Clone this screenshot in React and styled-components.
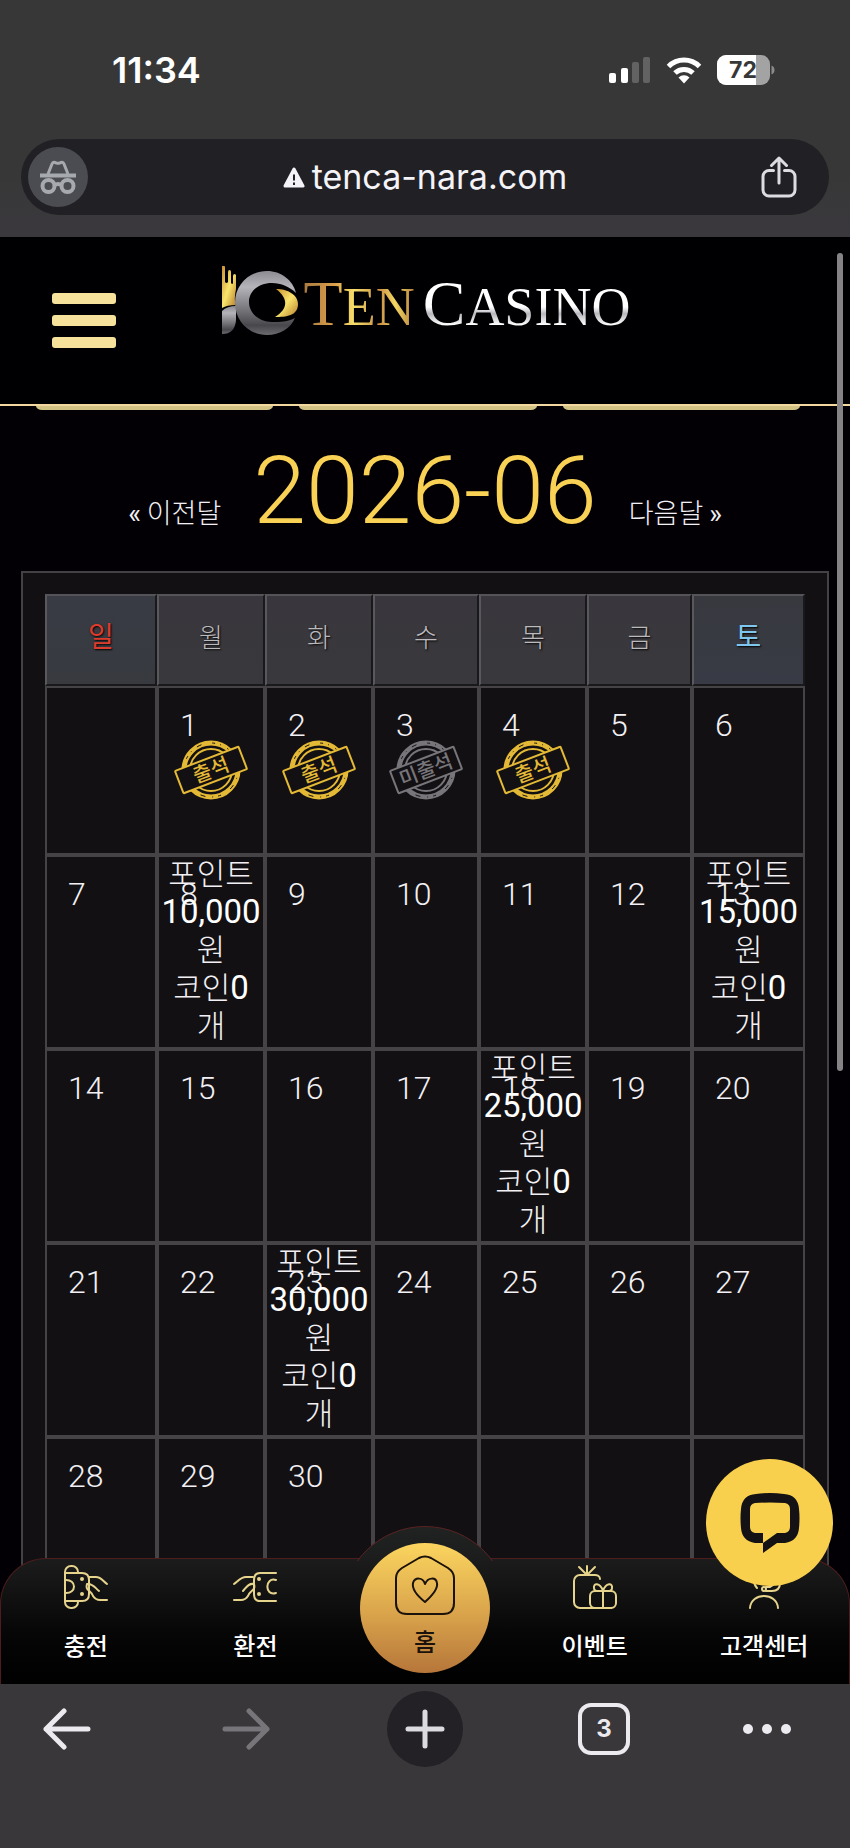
import React from "react";
import styled, { createGlobalStyle, css } from "styled-components";

const korean = '"Noto Sans CJK KR", "Noto Sans", sans-serif';
const digits = 'Roboto, "Noto Sans CJK KR", sans-serif';
const latin = 'Inter, "Noto Sans CJK KR", sans-serif';

const GlobalStyle = createGlobalStyle`
  *, *::before, *::after { box-sizing: border-box; }
  html, body { margin: 0; height: 100%; background: #39373a; }
  button { border: 0; padding: 0; background: none; font: inherit; color: inherit; cursor: pointer; }
  a { color: inherit; text-decoration: none; }
  svg { display: block; }
`;

const Screen = styled.div`
  display: flex;
  flex-direction: column;
  height: 100vh;
  font-family: ${korean};
  color: #f2f0f4;
`;

/* ---------- browser top ---------- */

const BrowserTop = styled.header`
  flex: none;
  background: linear-gradient(#373737 70%, #3a383d);
  padding-bottom: 22px;
  font-family: ${latin};
`;

const StatusBar = styled.div`
  display: flex;
  align-items: center;
  justify-content: space-between;
  height: 139px;
  padding: 0 75px 0 112px;
`;

const Clock = styled.time`
  font-size: 36px;
  font-weight: 600;
  color: #fff;
`;

const StatusIcons = styled.div`
  display: flex;
  align-items: center;
  gap: 15px;
`;

const AddressBar = styled.div`
  display: grid;
  grid-template-columns: 1fr auto 1fr;
  align-items: center;
  height: 76px;
  margin: 0 21px;
  padding: 0 32px 0 7px;
  border-radius: 38px;
  background: #212024;
`;

const IncognitoBadge = styled.button`
  display: grid;
  place-items: center;
  width: 60px;
  height: 60px;
  border-radius: 50%;
  background: #4b4c51;
`;

const Address = styled.button`
  display: flex;
  align-items: center;
  gap: 7px;
  padding-left: 25px;
  font-size: 34px;
  line-height: 40px;
  color: #f4f3f7;
`;

const ShareButton = styled.button`
  justify-self: end;
`;

/* ---------- site ---------- */

const Site = styled.div`
  position: relative;
  flex: 1;
  min-height: 0;
  overflow: hidden;
  background: #020004;
`;

const SiteHeader = styled.div`
  display: grid;
  grid-template-columns: 1fr auto 1fr;
  align-items: start;
  height: 169px;
  padding: 0 52px;
  border-bottom: 2px solid #f3d9a0;
  background: #000003;
`;

const MenuButton = styled.button`
  display: flex;
  flex-direction: column;
  gap: 11px;
  width: 64px;
  margin-top: 56px;
`;

const MenuBar = styled.span`
  height: 11px;
  border-radius: 3px;
  background: #f6e29a;
`;

const LogoLink = styled.a`
  display: flex;
  align-items: flex-start;
  gap: 4px;
  margin-top: 29px;
  padding-left: 2px;
`;

const LogoText = styled.span`
  display: flex;
  gap: 8px;
  margin-top: 5px;
  font-family: "Liberation Serif", serif;
  font-size: 54px;
  line-height: 66px;
`;

const LogoWord = styled.span`
  display: block;
  color: transparent;
  background: ${(p) =>
    p.$gold
      ? "linear-gradient(90deg, #a9793f, #dba04c 28%, #f7e06a 45%, #c98f45 68%, #f5d862 82%, #b27c3e)"
      : "linear-gradient(#fff 52%, #b9b7bd 62%, #fff 78%)"};
  background-clip: text;
  -webkit-background-clip: text;
  &::first-letter { font-size: 64px; }
`;

const TabEdges = styled.div`
  display: grid;
  grid-template-columns: repeat(3, 1fr);
  gap: 26px;
  padding: 0 50px 0 36px;
`;

const TabEdge = styled.div`
  height: 4px;
  border-radius: 0 0 6px 6px / 0 0 4px 4px;
  background: #d2c283;
`;

const MonthBar = styled.nav`
  display: flex;
  align-items: baseline;
  justify-content: center;
  gap: 32px;
  padding: 35px 0 34px;
`;

const MonthTitle = styled.h1`
  margin: 0;
  font-family: ${digits};
  font-size: 95px;
  line-height: 92px;
  font-weight: 300;
  color: #f8d155;
`;

const MonthLink = styled.a`
  font-size: 27px;
  line-height: 38px;
  font-weight: 300;
`;

const Chevrons = styled.span`
  font-family: ${digits};
  font-weight: 400;
`;

const Panel = styled.section`
  margin: 0 21px;
  padding: 21px 22px;
  border: 2px solid #434144;
  background: #121013;
`;

const Calendar = styled.table`
  width: 100%;
  table-layout: fixed;
  border-collapse: separate;
  border-spacing: 0;
`;

const dayTone = {
  sun: css`
    color: #dc3c2c;
    background: linear-gradient(#393b45, #383a40);
    font-size: 28px;
    font-weight: 400;
  `,
  sat: css`
    color: #7fc6ee;
    background: linear-gradient(#38393f, #383b45);
    font-size: 28px;
    font-weight: 400;
  `,
  week: css`
    color: #bcbabd;
    background: linear-gradient(#39373d, #39383c);
    font-size: 26px;
    font-weight: 300;
  `,
};

const WeekdayCell = styled.th`
  height: 92px;
  padding: 0 0 10px;
  border: 2px solid;
  border-color: #545358 #19181b #19181b #59585c;
  text-shadow: 1px 1px 2px #000;
  ${(p) => dayTone[p.$tone]}
`;

const DayCell = styled.td`
  height: ${(p) => (p.$short ? 169 : 194)}px;
  padding: 0;
  border: 2px solid #454346;
  vertical-align: top;
`;

const DayStack = styled.div`
  display: grid;
  > * { grid-area: 1 / 1; }
`;

const DayNumber = styled.span`
  padding: 18px 0 0 21px;
  font-family: ${digits};
  font-size: 32px;
  line-height: 38px;
  font-weight: 300;
`;

const StampSlot = styled.div`
  display: grid;
  justify-content: center;
  padding-top: 50px;
`;

const Reward = styled.div`
  height: 190px;
  font-size: 31px;
  line-height: 30px;
  font-weight: 300;
  text-align: center;
  white-space: nowrap;
`;

const RewardLine = styled.div`
  height: 38px;
`;

const Amount = styled.span`
  font-family: ${digits};
  font-size: 33px;
  font-weight: 400;
  line-height: 30px;
  color: #fff;
`;

const ScrollThumb = styled.div`
  position: absolute;
  top: 16px;
  right: 7px;
  width: 6px;
  height: 56.5%;
  border-radius: 3px;
  background: #858386;
`;

/* ---------- site bottom navigation ---------- */

const BottomNav = styled.nav`
  position: absolute;
  left: 0;
  right: 0;
  bottom: 0;
  display: grid;
  grid-template-columns: repeat(5, 1fr);
  height: 126px;
  border: 1px solid #4d1d1e;
  border-bottom: 0;
  border-radius: 46px 46px 0 0;
  background: linear-gradient(#1c1c1d, #060607 60%, #000);
`;

const Dome = styled.div`
  position: absolute;
  top: -33px;
  left: 50%;
  width: 168px;
  height: 35px;
  margin-left: -84px;
  overflow: hidden;
  &::before {
    content: "";
    display: block;
    height: 168px;
    border: 1px solid #5a2223;
    border-radius: 50%;
    background: linear-gradient(#202321, #1c1c1d 35px);
  }
`;

const NavItem = styled.a`
  display: flex;
  flex-direction: column;
  align-items: center;
  gap: 24px;
  padding-top: 6px;
  font-size: 24px;
  line-height: 24px;
  font-weight: 500;
  color: #fff;
`;

const HomeItem = styled.a`
  position: relative;
  justify-self: center;
  display: flex;
  flex-direction: column;
  align-items: center;
  gap: 14px;
  width: 130px;
  height: 130px;
  margin-top: -16px;
  padding-top: 12px;
  border-radius: 50%;
  font-size: 24px;
  line-height: 24px;
  font-weight: 500;
  color: #1a120b;
  background: linear-gradient(#fbd55f, #d9a34b 55%, #b6763a);
`;

const ChatButton = styled.button`
  position: absolute;
  right: 17px;
  bottom: 98px;
  display: grid;
  place-items: center;
  width: 127px;
  height: 127px;
  border-radius: 50%;
  background: #f8d04d;
`;

/* ---------- browser bottom ---------- */

const BrowserTools = styled.footer`
  flex: none;
  display: flex;
  align-items: flex-start;
  justify-content: space-between;
  height: 164px;
  padding: 7px 59px 0 27px;
  background: #39373a;
`;

const Tool = styled.button`
  display: grid;
  place-items: center;
  width: ${(p) => (p.$narrow ? 48 : 80)}px;
  height: 76px;
`;

const NewTab = styled.span`
  display: grid;
  place-items: center;
  width: 76px;
  height: 76px;
  border-radius: 50%;
  background: #232125;
`;

const TabCount = styled.span`
  display: grid;
  place-items: center;
  width: 52px;
  height: 52px;
  border: 4px solid #eceaee;
  border-radius: 13px;
  font-family: ${latin};
  font-size: 24px;
  line-height: 24px;
  font-weight: 700;
  color: #eceaee;
`;

/* ---------- drawings ---------- */

const Signal = () => (
  <svg width="42" height="28" viewBox="0 0 42 28">
    <rect x="0" y="17" width="7" height="10" rx="2" fill="#fff" />
    <rect x="12" y="12" width="7" height="15" rx="2" fill="#fff" />
    <rect x="23" y="6" width="7" height="21" rx="2" fill="#626263" />
    <rect x="34" y="1" width="7" height="26" rx="2" fill="#626263" />
  </svg>
);

const Wifi = () => (
  <svg width="36" height="28" viewBox="0 0 36 28" fill="none" stroke="#fff" strokeWidth="5">
    <path d="M2.5 10.5a22 22 0 0 1 31 0" />
    <path d="M9 17a13 13 0 0 1 18 0" />
    <path d="M12.5 21.5a8 8 0 0 1 11 0L18 27.5z" fill="#fff" stroke="none" />
  </svg>
);

const Battery = () => (
  <svg width="58" height="30" viewBox="0 0 58 30">
    <clipPath id="cell"><rect width="53" height="30" rx="9" /></clipPath>
    <g clipPath="url(#cell)">
      <rect width="53" height="30" fill="#a3a3a4" />
      <rect width="39" height="30" fill="#fff" />
    </g>
    <path d="M54.500 10.500c4 1 4 8 0 9z" fill="#8b8b8c" />
    <text x="26" y="23" textAnchor="middle" fontFamily="Inter, sans-serif" fontSize="23" fontWeight="700" fill="#373737">72</text>
  </svg>
);

const Incognito = () => (
  <svg width="38" height="34" viewBox="0 0 38 34" fill="none" stroke="#a6a9ad" strokeWidth="4">
    <path d="M9 14L13 4c.6-1.600 1.600-2 3-1.500l1.500.6c1 .3 2 .3 3 0l1.500-.6c1.400-.5 2.400-.1 3 1.500l4 10" strokeWidth="3" />
    <path d="M1 15.500h36" />
    <circle cx="9.500" cy="26" r="6" />
    <circle cx="28.500" cy="26" r="6" />
    <path d="M15 25.500c2.500-1.800 5.500-1.800 8 0" />
  </svg>
);

const Warning = () => (
  <svg width="22" height="21" viewBox="0 0 22 21">
    <path d="M11 2L20 19H2z" fill="#f4f3f7" stroke="#f4f3f7" strokeWidth="3" strokeLinejoin="round" />
    <path d="M11 7.500v6M11 15.500v2.500" stroke="#212024" strokeWidth="2" />
  </svg>
);

const Share = () => (
  <svg width="36" height="42" viewBox="0 0 36 42" fill="none" stroke="#dddce1" strokeWidth="3" strokeLinecap="round" strokeLinejoin="round">
    <path d="M12.500 14.500H8a6 6 0 0 0-6 6V34a6 6 0 0 0 6 6h20a6 6 0 0 0 6-6V20.500a6 6 0 0 0-6-6h-4.500" />
    <path d="M18 27V2.500M10.500 9.500L18 2l7.500 7.500" />
  </svg>
);

const LogoMark = () => (
  <svg width="78" height="70" viewBox="0 0 78 70">
    <defs>
      <linearGradient id="silver" x1="0" y1="0" x2="0" y2="1">
        <stop offset="0" stopColor="#8c8b92" />
        <stop offset=".25" stopColor="#b5b4ba" />
        <stop offset=".6" stopColor="#77767b" />
        <stop offset=".85" stopColor="#48474b" />
        <stop offset="1" stopColor="#6c6b70" />
      </linearGradient>
      <linearGradient id="gold" x1="0" y1="0" x2="1" y2="1">
        <stop offset="0" stopColor="#c78e30" />
        <stop offset=".5" stopColor="#fae46c" />
        <stop offset="1" stopColor="#b57c2c" />
      </linearGradient>
    </defs>
    <path d="M0 0h2q1 0 1 1v15q1.500 2 3 0V6q0-2 1.500-2T9 6v11q1.500 2 2 0v-7q0-2 2-2l1 1v14q-2 9-.5 16Q5 39 0 42z" fill="url(#gold)" />
    <path d="M0 45Q5 40 14 40v14Q13 68 0 68z" fill="url(#silver)" />
    <path d="M74 27C71 14 59 5 45 5C27 5 13 19 13 37S27 69 45 69C58 69 69 62 73 52C66 56 58 56 50 56C37 56 27 47 27 36S37 17 50 17C59 17 68 21 74 27Z" fill="url(#silver)" />
    <path d="M54 23C66 23 76 29 76 38C76 50 64 51 53 51C66 43 67 33 54 23Z" fill="url(#gold)" />
  </svg>
);

const Stamp = ({ missed }) => {
  const ink = missed ? "#77757a" : "#e3b935";
  return (
    <svg width="76" height="64" viewBox="0 0 76 64" fill="none" stroke={ink}>
      <circle cx="38" cy="32" r="27" strokeWidth="5" />
      <circle cx="38" cy="32" r="27" stroke="#121013" strokeWidth="1" strokeDasharray="3 5 1 7 5 11" />
      <circle cx="38" cy="32" r="21" strokeWidth="2" />
      <g transform="rotate(-21 38 32)">
        <rect x="4" y="20" width="68" height="24" rx="1" fill="#121013" strokeWidth="2" />
        <text x="38" y="39" textAnchor="middle" fontFamily={korean} fontSize="20" fontWeight="500" fill={ink} stroke="none">
          {missed ? "미출석" : "출석"}
        </text>
      </g>
    </svg>
  );
};

const LineIcon = ({ children }) => (
  <svg width="44" height="44" viewBox="0 0 44 44" fill="none" stroke="#e6d48c" strokeWidth="2" strokeLinecap="round" strokeLinejoin="round">
    {children}
  </svg>
);

const DepositIcon = () => (
  <LineIcon>
    <path d="M14 8V7a6 6 0 0 0-6-6H7a6 6 0 0 0-6 6v30a6 6 0 0 0 6 6h1a6 6 0 0 0 6-6v-1" />
    <path d="M1 8h17q7 0 7 7v14q0 7-7 7H1M1 15c12-1 12 14 0 13" />
    <circle cx="18" cy="14" r="1" />
    <circle cx="18" cy="29" r="1" />
    <path d="M25 12h7c5 0 7 4 11 7M23 19c6-1 8 4 12 7M23 19c-2 7 4 6 6 12 2 3 4 4 7 4h7" />
  </LineIcon>
);

const WithdrawIcon = () => (
  <LineIcon>
    <path d="M43 8H27q-6 0-6 7v14q0 7 6 7h16M43 15c-11-4-12 17 0 13" />
    <circle cx="26" cy="14" r="1" />
    <circle cx="26" cy="29" r="1" />
    <path d="M20 12h-7c-5 0-8 4-12 7M21 19c-6-1-8 4-11 7M21 19c2 7-4 6-6 12-2 3-4 4-7 4H1" />
  </LineIcon>
);

const EventIcon = () => (
  <LineIcon>
    <path d="M14 1v8M6 2l7 7M22 2l-7 7" />
    <path d="M27 14c0-3-3-4-5-4H7a6 6 0 0 0-6 6v21a6 6 0 0 0 6 6h31" />
    <rect x="17" y="26" width="26" height="17" rx="5" />
    <path d="M30 26v17M30 26c-3-9-10-8-9-3 0 2 2 3 4 3M30 26c3-9 10-8 9-3 0 2-2 3-4 3" />
  </LineIcon>
);

const SupportIcon = () => (
  <LineIcon>
    <path d="M13 17a9 9 0 0 1 18 0M12 15c0 4 1 6 3 8M24 26h6c5 0 8-3 8-8M24 22h4l3-2" />
    <circle cx="22" cy="24" r="2" />
    <path d="M8 43c1-16 27-16 28 0" />
  </LineIcon>
);

const HomeIcon = () => (
  <svg width="60" height="60" viewBox="0 0 60 60" fill="none" stroke="#1a120b" strokeWidth="2" strokeLinejoin="round">
    <path d="M24 3Q30 0 36 3L53 13Q59 17 59 23V48Q59 59 48 59H12Q1 59 1 48V23Q1 17 7 13Z" />
    <path d="M30 47C20 39 17 33 18 28C20 22 28 22 30 29C33 22 41 22 42 28C43 33 39 39 30 47Z" />
  </svg>
);

const ChatIcon = () => (
  <svg width="60" height="60" viewBox="0 0 60 60">
    <path
      fillRule="evenodd"
      fill="#141214"
      d="M16 1Q30-1 44 1Q58 2 59 16Q60 25 59 35Q58 48 45 50H37L23 60V50H15Q2 48 1 35Q0 25 1 16Q2 2 16 1Z
         M15 10Q10 11 10 16V34Q10 39 15 40H23V50L37 40H45Q50 39 50 34V16Q50 11 45 10Q30 9 15 10Z"
    />
  </svg>
);

const Arrow = ({ forward }) => (
  <svg width="50" height="42" viewBox="0 0 50 42" fill="none" stroke={forward ? "#777579" : "#eceaee"} strokeWidth="5" strokeLinecap="round" strokeLinejoin="round">
    <path d={forward ? "M4 21h42M28 3l18 18-18 18" : "M46 21H4M22 3L4 21l18 18"} />
  </svg>
);

const Plus = () => (
  <svg width="40" height="40" viewBox="0 0 40 40" stroke="#dcdbdf" strokeWidth="5" strokeLinecap="round">
    <path d="M20 3v34M3 20h34" />
  </svg>
);

const Dots = () => (
  <svg width="48" height="10" viewBox="0 0 48 10" fill="#eceaee">
    <circle cx="5" cy="5" r="5" />
    <circle cx="24" cy="5" r="5" />
    <circle cx="43" cy="5" r="5" />
  </svg>
);

/* ---------- data ---------- */

const columns = [112, 108, 108, 106, 108, 105, 113];

const weekdays = [
  ["일", "sun"],
  ["월", "week"],
  ["화", "week"],
  ["수", "week"],
  ["목", "week"],
  ["금", "week"],
  ["토", "sat"],
];

const attendance = { 1: "present", 2: "present", 3: "missed", 4: "present" };
const rewards = { 8: "10,000", 13: "15,000", 18: "25,000", 23: "30,000" };

const weeks = Array.from({ length: 5 }, (_, w) =>
  Array.from({ length: 7 }, (_, d) => {
    const day = w * 7 + d;
    return day >= 1 && day <= 30 ? day : null;
  })
);

const Day = ({ day }) => (
  <DayStack>
    <DayNumber>{day}</DayNumber>
    {attendance[day] && (
      <StampSlot>
        <Stamp missed={attendance[day] === "missed"} />
      </StampSlot>
    )}
    {rewards[day] && (
      <Reward>
        <RewardLine>포인트</RewardLine>
        <RewardLine><Amount>{rewards[day]}</Amount></RewardLine>
        <RewardLine>원</RewardLine>
        <RewardLine>코인<Amount>0</Amount></RewardLine>
        <RewardLine>개</RewardLine>
      </Reward>
    )}
  </DayStack>
);

export default function App() {
  return (
    <Screen>
      <GlobalStyle />
      <BrowserTop>
        <StatusBar>
          <Clock>11:34</Clock>
          <StatusIcons>
            <Signal />
            <Wifi />
            <Battery />
          </StatusIcons>
        </StatusBar>
        <AddressBar>
          <IncognitoBadge aria-label="Incognito"><Incognito /></IncognitoBadge>
          <Address><Warning />tenca-nara.com</Address>
          <ShareButton aria-label="Share"><Share /></ShareButton>
        </AddressBar>
      </BrowserTop>

      <Site>
        <SiteHeader>
          <MenuButton aria-label="Menu">
            <MenuBar />
            <MenuBar />
            <MenuBar />
          </MenuButton>
          <LogoLink href="#">
            <LogoMark />
            <LogoText>
              <LogoWord $gold>TEN</LogoWord>
              <LogoWord>CASINO</LogoWord>
            </LogoText>
          </LogoLink>
        </SiteHeader>
        <TabEdges>
          <TabEdge />
          <TabEdge />
          <TabEdge />
        </TabEdges>
        <MonthBar>
          <MonthLink href="#"><Chevrons>«</Chevrons> 이전달</MonthLink>
          <MonthTitle>2026-06</MonthTitle>
          <MonthLink href="#">다음달 <Chevrons>»</Chevrons></MonthLink>
        </MonthBar>
        <Panel>
          <Calendar>
            <colgroup>
              {columns.map((width, i) => (
                <col key={i} width={width} />
              ))}
            </colgroup>
            <thead>
              <tr>
                {weekdays.map(([name, tone]) => (
                  <WeekdayCell key={name} $tone={tone} scope="col">{name}</WeekdayCell>
                ))}
              </tr>
            </thead>
            <tbody>
              {weeks.map((week, w) => (
                <tr key={w}>
                  {week.map((day, d) => (
                    <DayCell key={d} $short={w === 0}>{day && <Day day={day} />}</DayCell>
                  ))}
                </tr>
              ))}
            </tbody>
          </Calendar>
        </Panel>
        <ScrollThumb />
        <BottomNav>
          <Dome />
          <NavItem href="#"><DepositIcon />충전</NavItem>
          <NavItem href="#"><WithdrawIcon />환전</NavItem>
          <HomeItem href="#"><HomeIcon />홈</HomeItem>
          <NavItem href="#"><EventIcon />이벤트</NavItem>
          <NavItem href="#"><SupportIcon />고객센터</NavItem>
        </BottomNav>
        <ChatButton aria-label="Chat"><ChatIcon /></ChatButton>
      </Site>

      <BrowserTools>
        <Tool aria-label="Back"><Arrow /></Tool>
        <Tool aria-label="Forward"><Arrow forward /></Tool>
        <Tool aria-label="New tab"><NewTab><Plus /></NewTab></Tool>
        <Tool aria-label="Tabs"><TabCount>3</TabCount></Tool>
        <Tool $narrow aria-label="More"><Dots /></Tool>
      </BrowserTools>
    </Screen>
  );
}
